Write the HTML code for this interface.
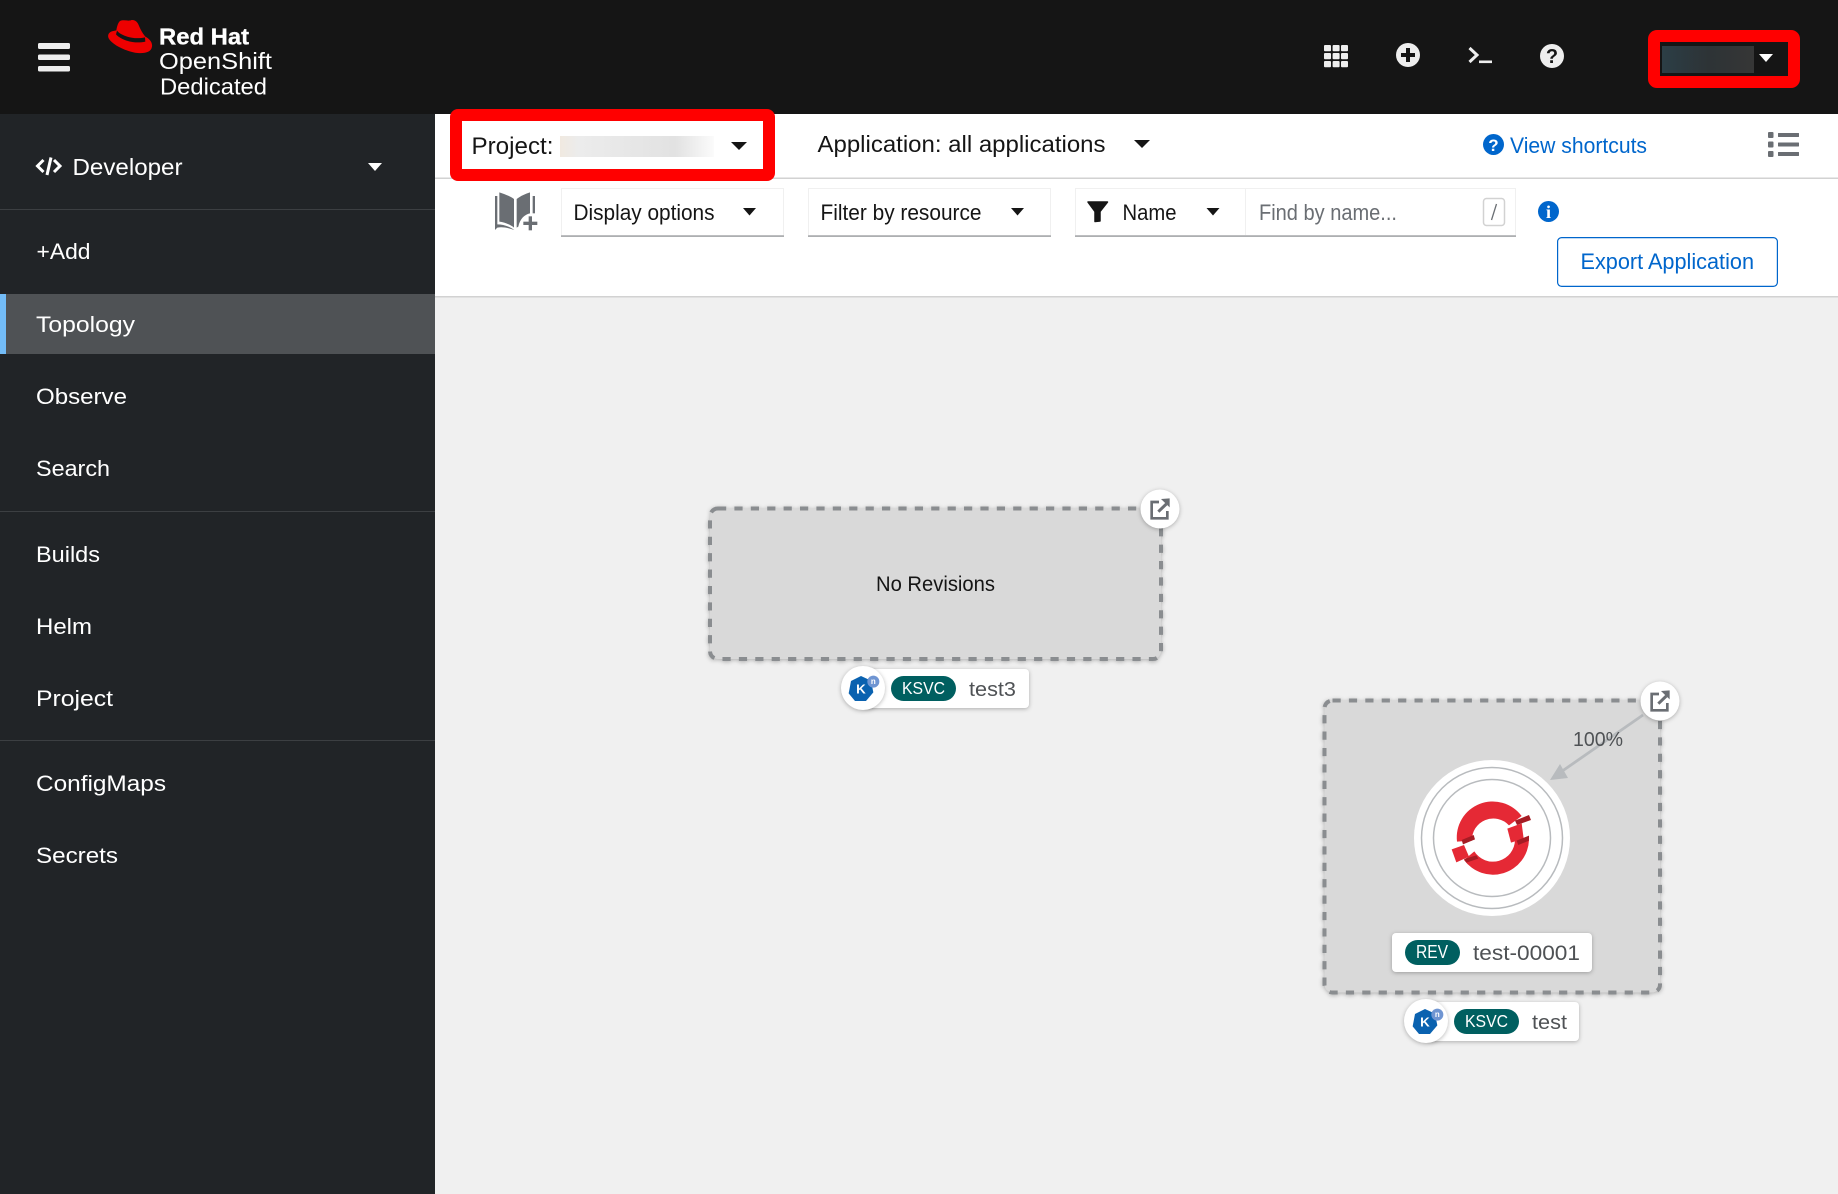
<!DOCTYPE html>
<html lang="en">
<head>
<meta charset="utf-8">
<title>Topology</title>
<style>
html,body{margin:0;padding:0;width:1838px;height:1194px;overflow:hidden;background:#f0f0f0}
svg{display:block}
text{font-family:"Liberation Sans",sans-serif}
.nav{font-size:22.5px;fill:#fff}
.tb{font-size:22px;fill:#151515}
.sh{filter:drop-shadow(0 1px 2px rgba(0,0,0,.28))}
</style>
</head>
<body>
<svg width="1838" height="1194" viewBox="0 0 1838 1194" xmlns="http://www.w3.org/2000/svg">
<defs>
<linearGradient id="b1" x1="0" x2="1" y1="0" y2="0">
<stop offset="0" stop-color="#f0e9e0"/><stop offset=".12" stop-color="#ececec"/><stop offset=".75" stop-color="#e2e2e2"/><stop offset="1" stop-color="#fbfbfb"/>
</linearGradient>
<linearGradient id="b2" x1="0" x2="1" y1="0" y2="0">
<stop offset="0" stop-color="#2c3e46"/><stop offset=".5" stop-color="#2d3336"/><stop offset="1" stop-color="#363636"/>
</linearGradient>
</defs>

<!-- backgrounds -->
<rect x="0" y="0" width="1838" height="1194" fill="#f0f0f0"/>
<rect x="435" y="114" width="1403" height="183" fill="#fff"/>
<rect x="435" y="177.5" width="1403" height="1.5" fill="#d2d2d2"/>
<rect x="435" y="296" width="1403" height="1.5" fill="#d2d2d2"/>
<rect x="0" y="0" width="1838" height="114" fill="#151515"/>
<rect x="0" y="114" width="435" height="1080" fill="#212427"/>

<!-- masthead -->
<rect x="38" y="43" width="32" height="6" rx="1.5" fill="#eee"/>
<rect x="38" y="54.5" width="32" height="5.5" rx="1.5" fill="#eee"/>
<rect x="38" y="66" width="32" height="5.5" rx="1.5" fill="#eee"/>
<g transform="translate(100 10) scale(.3333)">
<path fill="#e00" d="M60 33C72 27 85 35 95 30C107 29 114 38 118 50C122 60 130 73 136 80C148 86 158 97 156 110C154 126 135 131 113 129C83 126 38 106 26 85C21 74 28 65 40 63L49 61C51 50 54 38 60 33Z"/>
<path fill="#151515" d="M51 62C62 77 100 90 135 82L136 95C100 103 62 89 48 73Z"/>
</g>
<text x="159" y="44.5" font-size="23" font-weight="700" fill="#fff" stroke="#fff" stroke-width=".3" textLength="90" lengthAdjust="spacingAndGlyphs">Red Hat</text>
<text x="159" y="69" font-size="23" fill="#fff" textLength="113" lengthAdjust="spacingAndGlyphs">OpenShift</text>
<text x="160" y="94.5" font-size="23" fill="#fff" textLength="107" lengthAdjust="spacingAndGlyphs">Dedicated</text>

<!-- top icons -->
<g fill="#eee">
<rect x="1324" y="45" width="7" height="6.2" rx="1"/><rect x="1332.6" y="45" width="7" height="6.2" rx="1"/><rect x="1341" y="45" width="7" height="6.2" rx="1"/>
<rect x="1324" y="53" width="7" height="6.2" rx="1"/><rect x="1332.6" y="53" width="7" height="6.2" rx="1"/><rect x="1341" y="53" width="7" height="6.2" rx="1"/>
<rect x="1324" y="61" width="7" height="6.2" rx="1"/><rect x="1332.6" y="61" width="7" height="6.2" rx="1"/><rect x="1341" y="61" width="7" height="6.2" rx="1"/>
</g>
<circle cx="1408" cy="55" r="12" fill="#eee"/>
<rect x="1401" y="53" width="14" height="4" fill="#151515"/><rect x="1406" y="48" width="4" height="14" fill="#151515"/>
<polyline points="1469.5,48 1477,55 1469.5,62" fill="none" stroke="#eee" stroke-width="3"/>
<rect x="1479" y="60.5" width="13" height="2.6" fill="#eee"/>
<circle cx="1552" cy="56" r="12" fill="#eee"/>
<text x="1552" y="63" font-size="20" font-weight="700" fill="#151515" text-anchor="middle">?</text>

<!-- user red box -->
<rect x="1654" y="36" width="140" height="46" rx="3" fill="#151515" stroke="#f00" stroke-width="12"/>
<rect x="1662" y="46" width="92" height="27" fill="url(#b2)"/>
<polygon points="1759,54 1773,54 1766,62" fill="#fff"/>

<!-- sidebar -->
<g fill="none" stroke="#fff" stroke-width="3">
<polyline points="43.5,160 37.5,166 43.5,172"/>
<line x1="51" y1="157.5" x2="47" y2="175"/>
<polyline points="54,160 60,166 54,172"/>
</g>
<text x="72.500" y="175" font-size="23" fill="#fff" textLength="110" lengthAdjust="spacingAndGlyphs">Developer</text>
<polygon points="368,163 382,163 375,171" fill="#fff"/>
<rect x="0" y="209" width="435" height="1" fill="#3c3f42"/>
<text class="nav" x="36.500" y="259" textLength="54" lengthAdjust="spacingAndGlyphs">+Add</text>
<rect x="0" y="294" width="435" height="60" fill="#4f5255"/>
<rect x="0" y="294" width="6" height="60" fill="#73bcf7"/>
<text class="nav" x="36" y="332" textLength="99" lengthAdjust="spacingAndGlyphs">Topology</text>
<text class="nav" x="36" y="404" textLength="91" lengthAdjust="spacingAndGlyphs">Observe</text>
<text class="nav" x="36" y="476" textLength="74" lengthAdjust="spacingAndGlyphs">Search</text>
<rect x="0" y="511" width="435" height="1" fill="#3c3f42"/>
<text class="nav" x="36" y="562" textLength="64" lengthAdjust="spacingAndGlyphs">Builds</text>
<text class="nav" x="36" y="634" textLength="56" lengthAdjust="spacingAndGlyphs">Helm</text>
<text class="nav" x="36" y="706" textLength="77" lengthAdjust="spacingAndGlyphs">Project</text>
<rect x="0" y="740" width="435" height="1" fill="#3c3f42"/>
<text class="nav" x="36" y="791" textLength="130" lengthAdjust="spacingAndGlyphs">ConfigMaps</text>
<text class="nav" x="36" y="863" textLength="82" lengthAdjust="spacingAndGlyphs">Secrets</text>

<!-- project bar -->
<rect x="456" y="115" width="313" height="60" rx="2" fill="#fff" stroke="#f00" stroke-width="12" stroke-linejoin="round"/>
<text x="471.500" y="154" font-size="24" fill="#151515" textLength="82" lengthAdjust="spacingAndGlyphs">Project:</text>
<rect x="560" y="136" width="154" height="21" fill="url(#b1)"/>
<polygon points="731,142 747,142 739,150" fill="#151515"/>
<text x="817.500" y="152" font-size="23.500" fill="#151515" textLength="288" lengthAdjust="spacingAndGlyphs">Application: all applications</text>
<polygon points="1134,140 1150,140 1142,148" fill="#151515"/>
<circle cx="1493.500" cy="144.500" r="10.500" fill="#06c"/>
<text x="1493.500" y="151" font-size="17" font-weight="700" fill="#fff" text-anchor="middle">?</text>
<text x="1510" y="153" font-size="22" fill="#06c" textLength="137" lengthAdjust="spacingAndGlyphs">View shortcuts</text>
<g fill="#6a6e73">
<rect x="1768" y="132" width="5.500" height="6" rx="1"/><rect x="1778" y="133" width="21" height="4" rx=".5"/>
<rect x="1768" y="141.500" width="5.500" height="6" rx="1"/><rect x="1778" y="142.500" width="21" height="4" rx=".5"/>
<rect x="1768" y="151" width="5.500" height="6" rx="1"/><rect x="1778" y="152" width="21" height="4" rx=".5"/>
</g>

<!-- toolbar -->
<g transform="translate(485 185) scale(.3333)" fill="#6a6e73">
<path d="M43 22C60 28 75 33 87 42L87 128C75 118 58 112 43 110Z"/>
<path d="M95 42C108 32 120 27 135 22L135 85C120 88 105 100 100 125L95 128Z"/>
<path d="M30 33H37V118C55 118 75 125 88 135C70 128 50 125 37 128L30 135Z"/>
<rect x="143" y="33" width="7" height="52"/>
<rect x="115" y="110" width="42" height="10"/><rect x="131" y="94" width="10" height="42"/>
</g>

<rect x="561.500" y="188.500" width="222" height="47" fill="#fff" stroke="#f0f0f0"/>
<rect x="561" y="235.500" width="223" height="1.200" fill="#8a8d90"/>
<text class="tb" x="573.500" y="220" textLength="141" lengthAdjust="spacingAndGlyphs">Display options</text>
<polygon points="743,208 756,208 749.500,215.500" fill="#151515"/>

<rect x="808.500" y="188.500" width="242" height="47" fill="#fff" stroke="#f0f0f0"/>
<rect x="808" y="235.500" width="243" height="1.200" fill="#8a8d90"/>
<text class="tb" x="820.500" y="220" textLength="161" lengthAdjust="spacingAndGlyphs">Filter by resource</text>
<polygon points="1011,208 1024,208 1017.500,215.500" fill="#151515"/>

<rect x="1075.500" y="188.500" width="440" height="47" fill="#fff" stroke="#f0f0f0"/>
<line x1="1245.500" y1="188" x2="1245.500" y2="235" stroke="#f0f0f0"/>
<rect x="1075" y="235.500" width="441" height="1.200" fill="#8a8d90"/>
<path d="M1088 202H1107.500L1100 211.500V221L1095 221.500V211.500Z" fill="#151515" stroke="#151515" stroke-width="1.500" stroke-linejoin="round"/>
<text class="tb" x="1122.500" y="220" textLength="54" lengthAdjust="spacingAndGlyphs">Name</text>
<polygon points="1206.500,208 1219.500,208 1213,215.500" fill="#151515"/>
<text class="tb" x="1259" y="220" style="fill:#6a6e73" textLength="138" lengthAdjust="spacingAndGlyphs">Find by name...</text>
<rect x="1483.500" y="198.500" width="21" height="27" rx="3" fill="#fff" stroke="#d2d2d2" stroke-width="1.500"/>
<line x1="1496.500" y1="204" x2="1491.500" y2="220" stroke="#6a6e73" stroke-width="1.300"/>
<circle cx="1548.500" cy="211.500" r="10.500" fill="#06c"/>
<text x="1548.500" y="218" font-size="18" font-weight="700" fill="#fff" text-anchor="middle" style="font-family:'Liberation Serif',serif">i</text>

<rect x="1557.600" y="237.600" width="219.800" height="48.800" rx="4" fill="#fff" stroke="#06c" stroke-width="1.200"/>
<text x="1580.500" y="269" font-size="22" fill="#06c" textLength="173.500" lengthAdjust="spacingAndGlyphs">Export Application</text>

<!-- group 1 -->
<rect class="sh" x="710" y="508.500" width="451" height="150.500" rx="8" fill="#d9d9d9" stroke="#8a8d90" stroke-width="4" stroke-dasharray="8.200 8.200"/>
<text x="876" y="591" font-size="21.500" fill="#151515" textLength="119" lengthAdjust="spacingAndGlyphs">No Revisions</text>

<circle class="sh" cx="1160" cy="509" r="19.500" fill="#fff"/>
<g transform="translate(1139 490) scale(.3333)" fill="none" stroke="#6a6e73" stroke-width="8">
<polyline points="60,36 38,36 38,85 85,85 85,63"/>
<line x1="58" y1="65" x2="82" y2="42" stroke-width="9"/>
<polygon points="66,27 92,25 92,52" fill="#6a6e73" stroke="none"/>
</g>

<!-- label test3 -->
<rect class="sh" x="863" y="669" width="166" height="39" rx="4" fill="#fff"/>
<circle class="sh" cx="863" cy="688" r="22" fill="#fff"/>
<g transform="translate(841 665) scale(.3333)">
<polygon points="60,33 90,47 97,82 75,108 42,108 23,85 30,48" fill="#0a62b0"/>
<circle cx="97" cy="50" r="18" fill="#6f95d2"/>
<text x="60" y="86" font-size="40" font-weight="700" fill="#fff" text-anchor="middle">K</text>
<text x="97" y="57" font-size="24" font-weight="700" fill="#fff" text-anchor="middle">n</text>
</g>
<rect x="891" y="676" width="65" height="25" rx="12.500" fill="#005f60"/>
<text x="902" y="694" font-size="17.500" fill="#fff" textLength="43" lengthAdjust="spacingAndGlyphs">KSVC</text>
<text x="969" y="696" font-size="20.500" fill="#4f5255" textLength="47" lengthAdjust="spacingAndGlyphs">test3</text>

<!-- group 2 -->
<rect class="sh" x="1324.500" y="700.500" width="335.500" height="292" rx="8" fill="#d9d9d9" stroke="#8a8d90" stroke-width="4" stroke-dasharray="8.200 8.200"/>

<line x1="1643" y1="715" x2="1558" y2="774" stroke="#b8bbbe" stroke-width="2.800"/>
<polygon points="1550,780 1560,764 1568,778" fill="#b8bbbe"/>
<text x="1573" y="746" font-size="20.500" fill="#4f5255" textLength="50" lengthAdjust="spacingAndGlyphs">100%</text>

<circle cx="1660" cy="701" r="19.500" fill="#fff" class="sh"/>
<g transform="translate(1639 682) scale(.3333)" fill="none" stroke="#6a6e73" stroke-width="8">
<polyline points="60,36 38,36 38,85 85,85 85,63"/>
<line x1="58" y1="65" x2="82" y2="42" stroke-width="9"/>
<polygon points="66,27 92,25 92,52" fill="#6a6e73" stroke="none"/>
</g>

<!-- node -->
<circle cx="1492" cy="838" r="78" fill="#fff"/>
<circle cx="1492" cy="838" r="70.500" fill="none" stroke="#b8bbbe" stroke-width="1.500"/>
<circle cx="1492" cy="838" r="58.500" fill="none" stroke="#b8bbbe" stroke-width="1.500"/>
<g transform="translate(1439 790) scale(.3333)">
<g fill="#e52935">
<path d="M54 155A108 108 0 0 1 248 78L210 106A64 64 0 0 0 99 152Z"/>
<path d="M270 150A108 108 0 0 1 75 210L106 184A66 66 0 0 0 228 150Z"/>
<polygon points="38,178 75,165 90,200 52,217"/>
<polygon points="205,116 248,100 254,146 216,158"/>
</g>
<g fill="#a51c24">
<polygon points="68,150 104,135 108,148 72,163"/>
<polygon points="75,207 112,196 118,206 82,218"/>
<polygon points="228,92 270,75 276,90 234,105"/>
<polygon points="233,152 270,137 270,152 238,165"/>
</g>
</g>

<!-- label test-00001 -->
<rect class="sh" x="1392" y="933" width="200" height="39" rx="4" fill="#fff"/>
<rect x="1405" y="940" width="55" height="25" rx="12.500" fill="#005f60"/>
<text x="1416" y="958" font-size="18" fill="#fff" textLength="32" lengthAdjust="spacingAndGlyphs">REV</text>
<text x="1473" y="960" font-size="21" fill="#4f5255" textLength="107" lengthAdjust="spacingAndGlyphs">test-00001</text>

<!-- label test -->
<rect class="sh" x="1426" y="1002" width="153" height="39" rx="4" fill="#fff"/>
<circle class="sh" cx="1426" cy="1021" r="22" fill="#fff"/>
<g transform="translate(1405 998) scale(.3333)">
<polygon points="60,33 90,47 97,82 75,108 42,108 23,85 30,48" fill="#0a62b0"/>
<circle cx="97" cy="50" r="18" fill="#6f95d2"/>
<text x="60" y="86" font-size="40" font-weight="700" fill="#fff" text-anchor="middle">K</text>
<text x="97" y="57" font-size="24" font-weight="700" fill="#fff" text-anchor="middle">n</text>
</g>
<rect x="1454" y="1009" width="65" height="25" rx="12.500" fill="#005f60"/>
<text x="1465" y="1027" font-size="17.500" fill="#fff" textLength="43" lengthAdjust="spacingAndGlyphs">KSVC</text>
<text x="1532" y="1029" font-size="20.500" fill="#4f5255" textLength="35" lengthAdjust="spacingAndGlyphs">test</text>
</svg>
</body>
</html>
